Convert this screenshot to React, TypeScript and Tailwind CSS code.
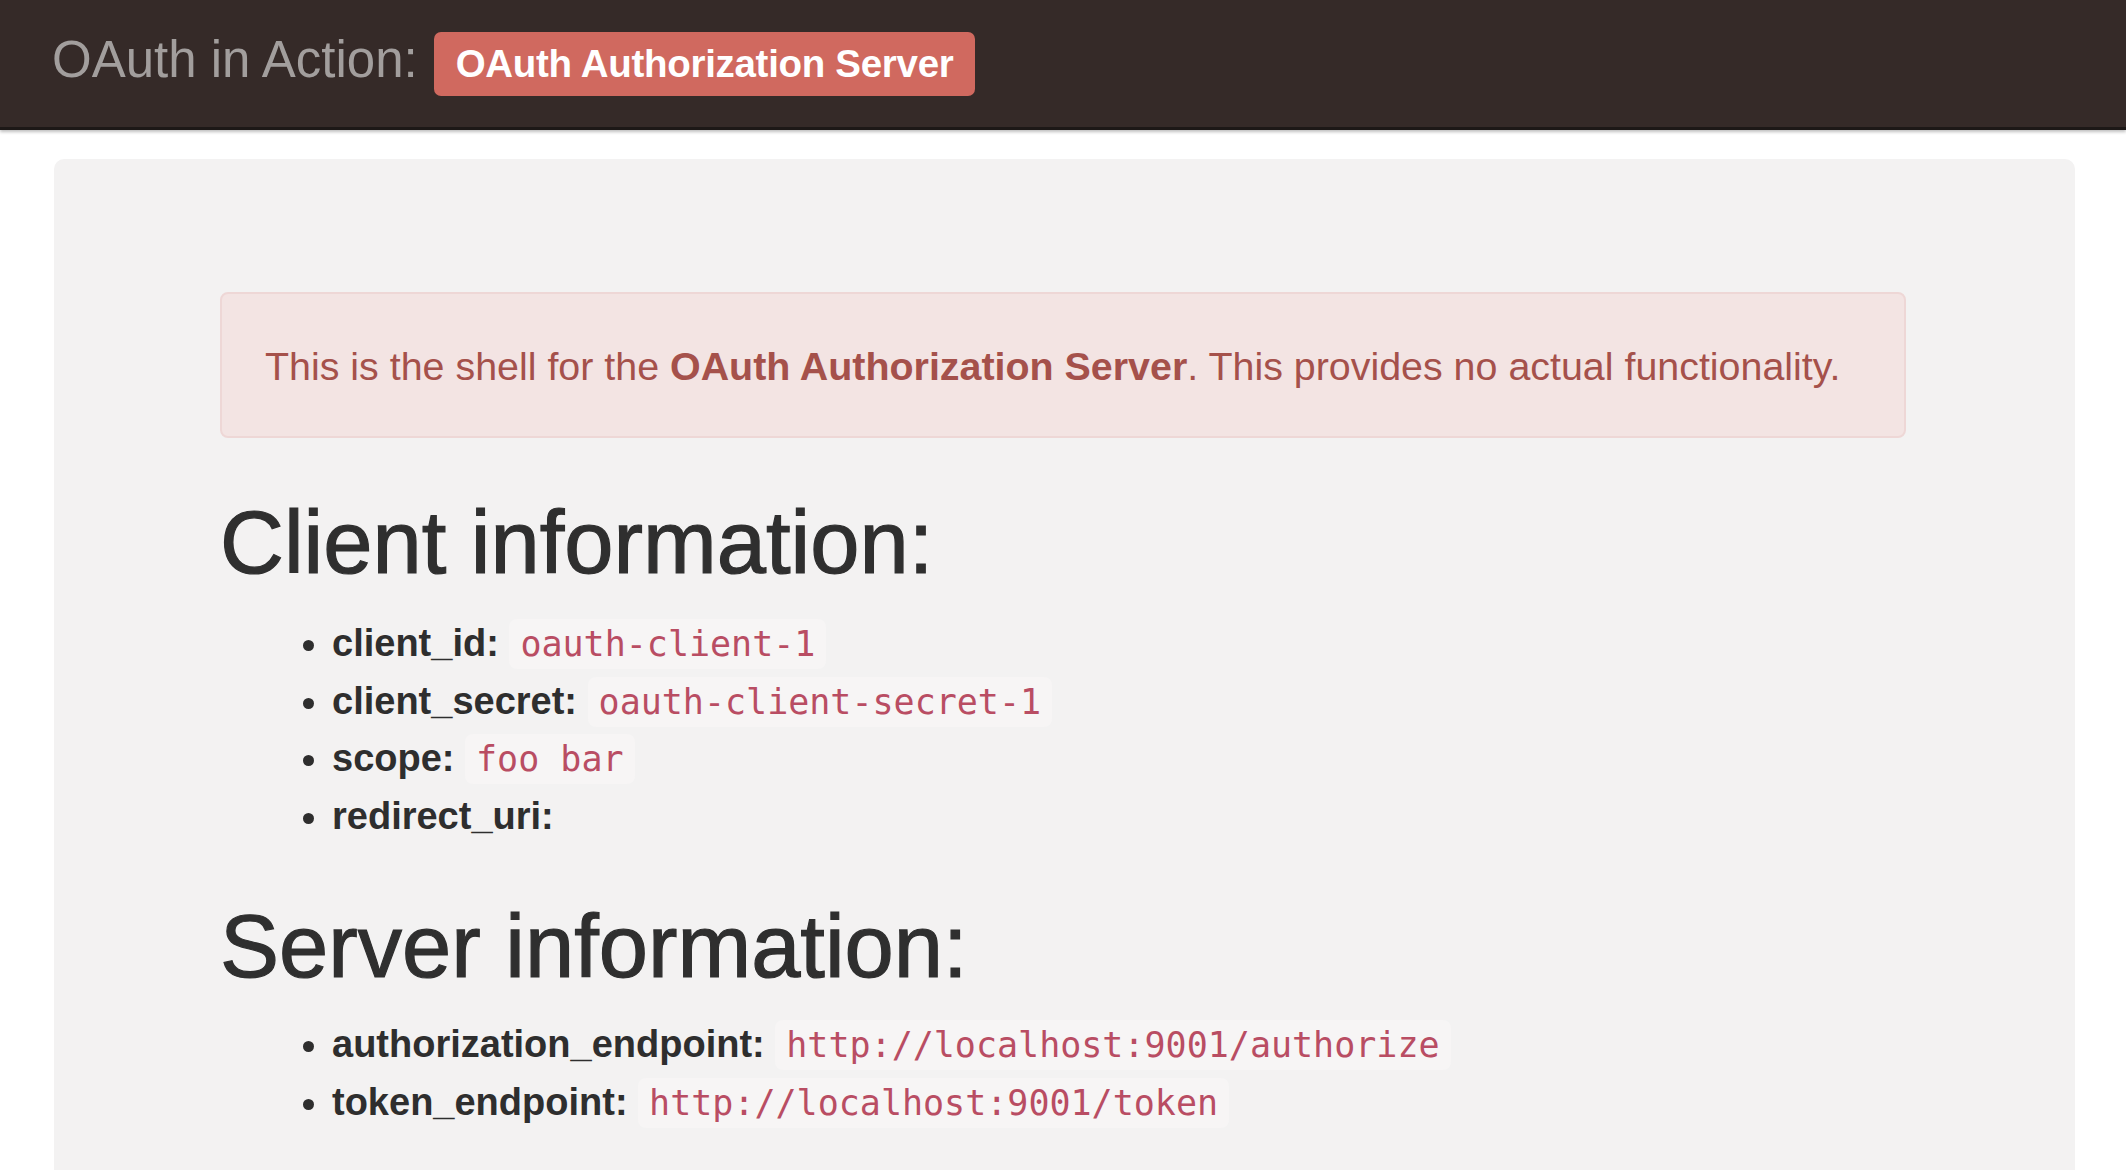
const clientInfo = [
  { label: "client_id:", value: "oauth-client-1" },
  { label: "client_secret:", value: "oauth-client-secret-1" },
  { label: "scope:", value: "foo bar" },
  { label: "redirect_uri:", value: "" },
]

const serverInfo = [
  { label: "authorization_endpoint:", value: "http://localhost:9001/authorize" },
  { label: "token_endpoint:", value: "http://localhost:9001/token" },
]

function InfoList({ items, className }: { items: { label: string; value: string }[]; className: string }) {
  return (
    <ul className={`list-disc pl-[112px] text-[38px] leading-[56.7px] text-[#2e2e2e] ${className}`}>
      {items.map(item => (
        <li key={item.label}>
          <b className="font-bold">{item.label}</b>{" "}
          {item.value && (
            <code className="font-['DejaVu_Sans_Mono',monospace] text-[35px] text-[#b94d63] bg-[#f7f5f5] px-[11px] py-[5px] rounded-[8px]">
              {item.value}
            </code>
          )}
        </li>
      ))}
    </ul>
  )
}

export default function App() {
  return (
    <div className="min-h-screen bg-white font-['Liberation_Sans',Arial,sans-serif]">
      <nav className="h-[130px] bg-[#352a28] border-b-[3px] border-[#1d1817] shadow-[0_2px_3px_rgba(0,0,0,0.25)] flex items-center pl-[52px]">
        <span className="text-[51px] text-[#a29e9d] -mt-[6px]">OAuth in Action:</span>
        <span className="ml-[16px] h-[64px] flex items-center px-[22px] rounded-[7px] bg-[#d0695f] text-white font-bold text-[38.5px] tracking-[-0.3px]">
          OAuth Authorization Server
        </span>
      </nav>

      <main className="mt-[29px] mx-[54px] w-[2021px] min-h-[1100px] bg-[#f3f2f2] rounded-[10px] pt-[133px] pl-[166px] pr-[169px] pb-[60px]">
        <div className="h-[146px] flex items-center pl-[43px] pt-[4px] bg-[#f3e4e3] border-2 border-[#eed7d6] rounded-[8px] text-[39.4px] text-[#a5514b]">
          <p>
            This is the shell for the <b className="font-bold">OAuth Authorization Server</b>. This provides no actual functionality.
          </p>
        </div>

        <h2 className="mt-[57px] text-[88.5px] leading-[95px] font-medium text-[#2f2f2f] [-webkit-text-stroke:1.2px_#2f2f2f]">Client information:</h2>
        <InfoList items={clientInfo} className="mt-[25px]" />

        <h2 className="mt-[54px] text-[88.5px] leading-[95px] font-medium text-[#2f2f2f] [-webkit-text-stroke:1.2px_#2f2f2f]">Server information:</h2>
        <InfoList items={serverInfo} className="mt-[22px]" />
      </main>
    </div>
  )
}
